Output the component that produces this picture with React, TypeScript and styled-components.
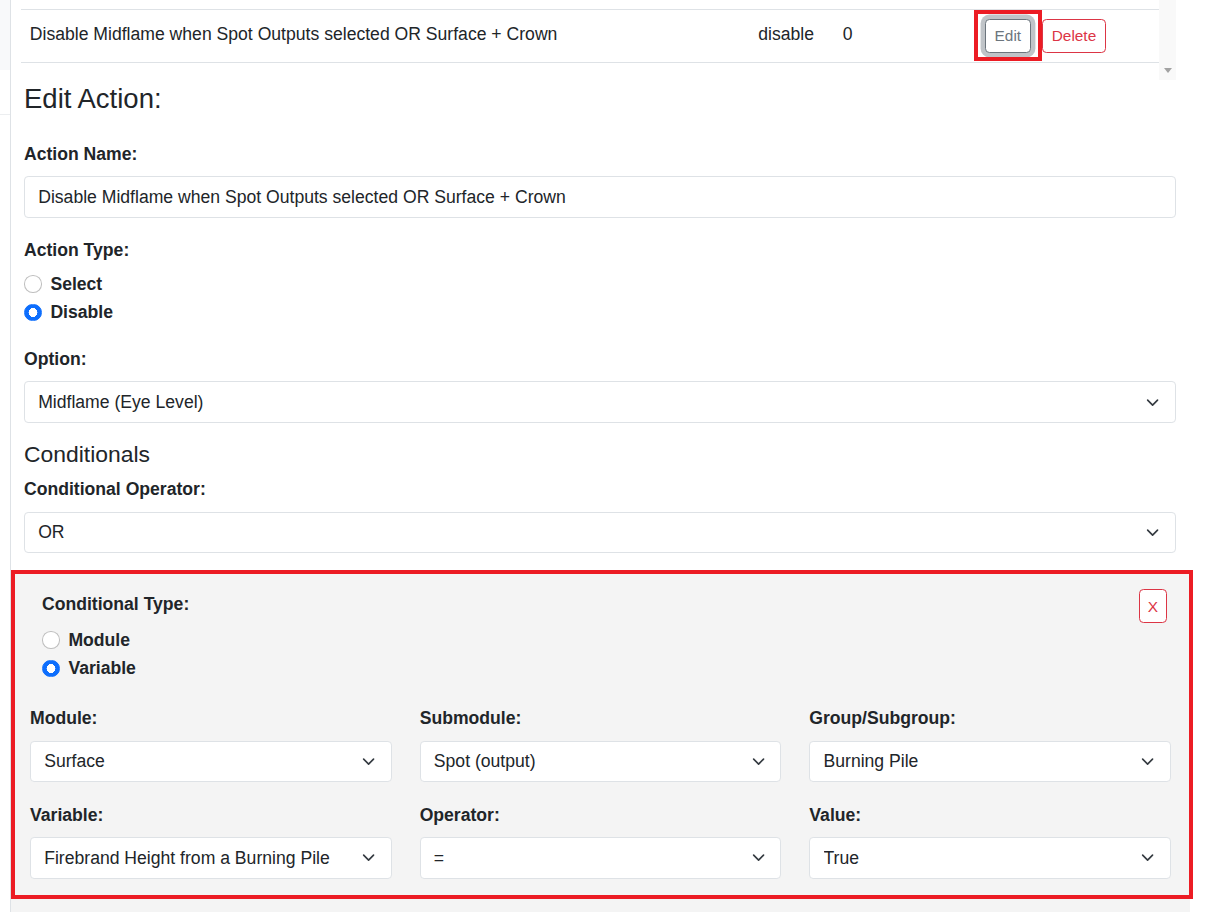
import * as React from 'react';
import styled, { createGlobalStyle } from 'styled-components';

const color = {
  text: '#212529',
  border: '#dee2e6',
  muted: '#6c757d',
  danger: '#dc3545',
  primary: '#0d6efd',
  panel: '#f4f4f4',
  mark: '#ec1c24',
};

const GlobalStyle = createGlobalStyle`
  html, body {
    margin: 0;
    padding: 0;
    background: #fff;
    overflow: hidden;
  }
  body {
    font-family: "Liberation Sans", Arial, sans-serif;
    font-size: 17.6px;
    line-height: 1.5;
    color: ${color.text};
  }
  * { box-sizing: border-box; }
`;

const Page = styled.div`
  display: flex;
  height: 912px;
  overflow: hidden;
`;

const Sidebar = styled.div`
  flex: 0 0 11px;
  display: flex;
  flex-direction: column;
  border-right: 1px solid ${color.border};
`;

const SidebarTop = styled.div`
  height: 70px;
  background: #f8f9fa;
`;

const SidebarDivider = styled.div`
  margin-top: 44px;
  border-top: 1px solid #eceef0;
`;

const Main = styled.main`
  flex: 1;
  min-width: 0;
  padding: 0 42px 0 13px;
`;

/* list of actions above the form, scrolled to the current row */
const ScrollBox = styled.div`
  display: flex;
  height: 80px;
  margin-left: -3px;
`;

const TableArea = styled.div`
  flex: 1;
  padding-top: 9px;
`;

const Row = styled.div`
  display: grid;
  grid-template-columns: 728.5px 84.5px 142px 1fr;
  height: 54px;
  border-top: 1px solid ${color.border};
  border-bottom: 1px solid ${color.border};
`;

const Cell = styled.div`
  padding: 10.5px 8.8px 0;
  white-space: nowrap;
`;

const ButtonCell = styled.div`
  display: flex;
  align-items: flex-start;
  padding: 8.8px 8.8px 0;
`;

const SmallButton = styled.button<{ $tone: 'muted' | 'danger'; $focused?: boolean }>`
  font-family: inherit;
  font-size: 15.4px;
  line-height: 1.5;
  padding: 4.4px 8.8px;
  background: #fff;
  color: ${p => (p.$tone === 'danger' ? color.danger : color.muted)};
  border: 1px solid ${p => (p.$tone === 'danger' ? color.danger : color.muted)};
  border-radius: 4.4px;
  box-shadow: ${p => (p.$focused ? '0 0 0 4.4px rgba(130, 138, 145, 0.5)' : 'none')};
`;

const Marked = styled.span`
  position: relative;
  display: inline-flex;
  margin-right: 11px;

  &::after {
    content: "";
    position: absolute;
    top: -9px;
    bottom: -8.6px;
    left: -11px;
    right: -11px;
    border: 4.5px solid ${color.mark};
    pointer-events: none;
  }
`;

const ScrollTrack = styled.div`
  flex: 0 0 17px;
  display: flex;
  align-items: flex-end;
  justify-content: center;
  padding-bottom: 7px;
  background: #f9f9f9;
`;

const ArrowDown = styled.div`
  width: 0;
  height: 0;
  border-left: 4.5px solid transparent;
  border-right: 4.5px solid transparent;
  border-top: 5px solid #a3a3a3;
`;

const Title = styled.h4`
  margin: 2px 0 25.8px;
  font-size: 27.5px;
  font-weight: 500;
  line-height: 33px;
`;

const Subtitle = styled.h5`
  margin: 1px 0 8px;
  font-size: 22.9px;
  font-weight: 500;
  line-height: 27.5px;
`;

const Field = styled.div<{ $gap?: number }>`
  margin-bottom: ${p => p.$gap ?? 17.6}px;
`;

const Label = styled.div<{ $space?: number }>`
  font-weight: 700;
  line-height: 26.4px;
  margin-bottom: ${p => p.$space ?? 8.8}px;
`;

const Control = styled.div`
  display: flex;
  align-items: center;
  height: 41.8px;
  padding: 6.6px 15.4px 6.6px 13.2px;
  background: #fff;
  border: 1px solid ${color.border};
  border-radius: 4.1px;
  white-space: nowrap;
`;

const ControlText = styled.span`
  flex: 1;
  overflow: hidden;
`;

const Chevron = () => (
  <svg width="13.2" height="13.2" viewBox="0 0 16 16" fill="none">
    <path d="m2 5 6 6 6-6" stroke="#343a40" strokeWidth="2" strokeLinecap="round" strokeLinejoin="round" />
  </svg>
);

const Select = ({ value }: { value: string }) => (
  <Control>
    <ControlText>{value}</ControlText>
    <Chevron />
  </Control>
);

const RadioGroup = styled.div`
  display: flex;
  flex-direction: column;
`;

const RadioRow = styled.label`
  display: flex;
  align-items: flex-start;
  min-height: 26.4px;
  margin-bottom: 2.2px;
  font-weight: 700;
`;

const RadioDot = styled.span<{ $checked: boolean }>`
  flex: 0 0 17.6px;
  height: 17.6px;
  margin: 4.4px 8.8px 0 0;
  border-radius: 50%;
  border: 1px solid ${p => (p.$checked ? color.primary : 'rgba(0, 0, 0, 0.25)')};
  background: ${p =>
    p.$checked
      ? `radial-gradient(circle, #fff 0 4.3px, ${color.primary} 4.6px)`
      : '#fff'};
`;

const Radio = ({ label, checked }: { label: string; checked: boolean }) => (
  <RadioRow>
    <RadioDot $checked={checked} />
    {label}
  </RadioRow>
);

const Panel = styled.section`
  position: relative;
  margin: 0 -14px 0 -13px;
  padding: 20.5px 19px 60px;
  background: ${color.panel};

  &::after {
    content: "";
    position: absolute;
    top: -1px;
    left: 0;
    right: -3px;
    height: 321px;
    border: 4.5px solid ${color.mark};
    pointer-events: none;
  }
`;

const PanelHead = styled.div`
  display: flex;
  justify-content: space-between;
  align-items: flex-start;
  padding: 0 4px 0 12px;
  margin-bottom: 21.5px;
`;

const CloseButton = styled(SmallButton)`
  height: 34px;
  width: 28px;
  margin-top: -2px;
  padding: 0;
`;

const ConditionGrid = styled.div`
  display: grid;
  grid-template-columns: repeat(3, 1fr);
  column-gap: 28px;
`;

const conditionFields = [
  { label: 'Module:', value: 'Surface' },
  { label: 'Submodule:', value: 'Spot (output)' },
  { label: 'Group/Subgroup:', value: 'Burning Pile' },
  { label: 'Variable:', value: 'Firebrand Height from a Burning Pile' },
  { label: 'Operator:', value: '=' },
  { label: 'Value:', value: 'True' },
];

export default function App() {
  return (
    <>
      <GlobalStyle />
      <Page>
        <Sidebar>
          <SidebarTop />
          <SidebarDivider />
        </Sidebar>
        <Main>
          <ScrollBox>
            <TableArea>
              <Row>
                <Cell>Disable Midflame when Spot Outputs selected OR Surface + Crown</Cell>
                <Cell>disable</Cell>
                <Cell>0</Cell>
                <ButtonCell>
                  <Marked>
                    <SmallButton $tone="muted" $focused>Edit</SmallButton>
                  </Marked>
                  <SmallButton $tone="danger">Delete</SmallButton>
                </ButtonCell>
              </Row>
            </TableArea>
            <ScrollTrack>
              <ArrowDown />
            </ScrollTrack>
          </ScrollBox>

          <Title>Edit Action:</Title>

          <Field $gap={19}>
            <Label>Action Name:</Label>
            <Control>
              <ControlText>Disable Midflame when Spot Outputs selected OR Surface + Crown</ControlText>
            </Control>
          </Field>

          <Field $gap={18.5}>
            <Label $space={7.4}>Action Type:</Label>
            <RadioGroup>
              <Radio label="Select" checked={false} />
              <Radio label="Disable" checked />
            </RadioGroup>
          </Field>

          <Field>
            <Label>Option:</Label>
            <Select value="Midflame (Eye Level)" />
          </Field>

          <Subtitle>Conditionals</Subtitle>

          <Field>
            <Label>Conditional Operator:</Label>
            <Select value="OR" />
          </Field>

          <Panel>
            <PanelHead>
              <div>
                <Label>Conditional Type:</Label>
                <RadioGroup>
                  <Radio label="Module" checked={false} />
                  <Radio label="Variable" checked />
                </RadioGroup>
              </div>
              <CloseButton $tone="danger">X</CloseButton>
            </PanelHead>
            <ConditionGrid>
              {conditionFields.map(f => (
                <Field key={f.label} $gap={19.6}>
                  <Label>{f.label}</Label>
                  <Select value={f.value} />
                </Field>
              ))}
            </ConditionGrid>
          </Panel>
        </Main>
      </Page>
    </>
  );
}
